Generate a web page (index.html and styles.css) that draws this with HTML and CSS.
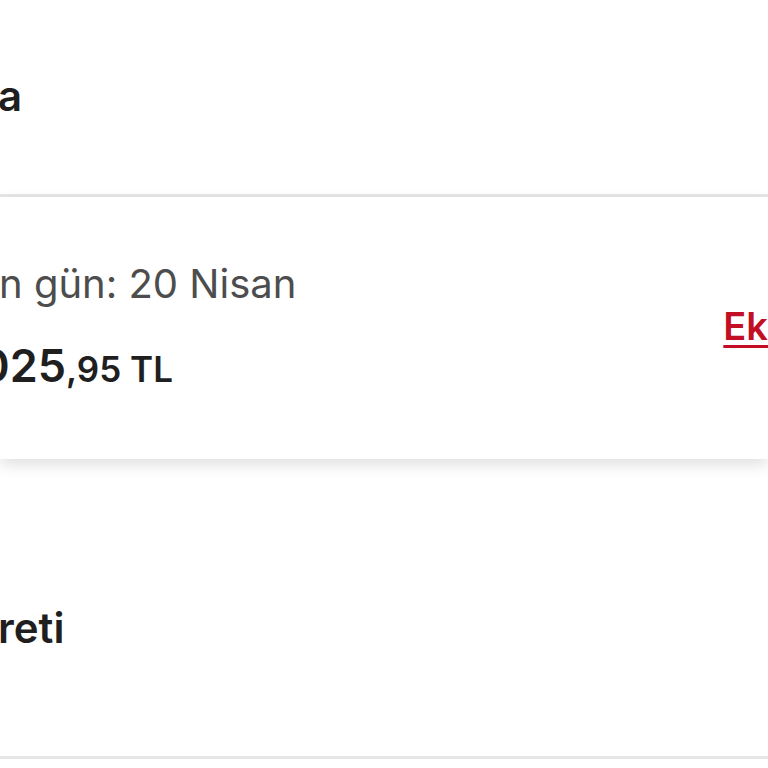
FILE: index.html
```html
<!DOCTYPE html>
<html lang="tr">
<head>
    <meta charset="UTF-8">
    <meta name="viewport" content="width=device-width, initial-scale=1.0">
    <title>Ödeme</title>
    <link rel="stylesheet" href="styles.css">
</head>
<body>
    <div class="page">
        <section class="block top">
            <div class="title">a</div>
        </section>

        <section class="block card">
            <div class="info">
                <div class="due">n gün: 20 Nisan</div>
                <div class="amount"><span class="big">025</span>,95 TL</div>
            </div>
            <a class="link" href="#">Ek</a>
        </section>

        <section class="block bottom">
            <div class="title">reti</div>
        </section>
    </div>
</body>
</html>
```

FILE: styles.css
```css
body {
    margin: 0;
    background-color: #fff;
    font-family: Inter, Lato, sans-serif;
    color: #1f1f1f;
}
.page {
    width: 768px;
    overflow: hidden;
}
.block {
    display: flex;
    align-items: center;
    background-color: #fff;
}
.top {
    height: 194px;
    border-bottom: 3px solid #e6e6e6;
}
.card {
    height: 262px;
    justify-content: space-between;
    position: relative;
    box-shadow: 0 6px 14px rgba(0, 0, 0, 0.12);
}
.bottom {
    height: 300px;
    padding-top: 44px;
    box-sizing: border-box;
    border-bottom: 3px solid #e6e6e6;
}
.title {
    font-size: 42px;
    font-weight: 600;
    margin-left: -2px;
    margin-top: -4px;
}
.info {
    display: flex;
    flex-direction: column;
    gap: 30px;
    padding-bottom: 4px;
}
.due {
    font-size: 40px;
    color: #4d4d4d;
    margin-left: -1px;
}
.amount {
    font-size: 35px;
    font-weight: 600;
    margin-left: -20px;
}
.amount .big {
    font-size: 45px;
}
.link {
    font-size: 38px;
    font-weight: 600;
    color: #c30f23;
    text-decoration: underline;
    text-underline-offset: 5px;
    margin-right: 0;
    margin-bottom: 4px;
}
```
